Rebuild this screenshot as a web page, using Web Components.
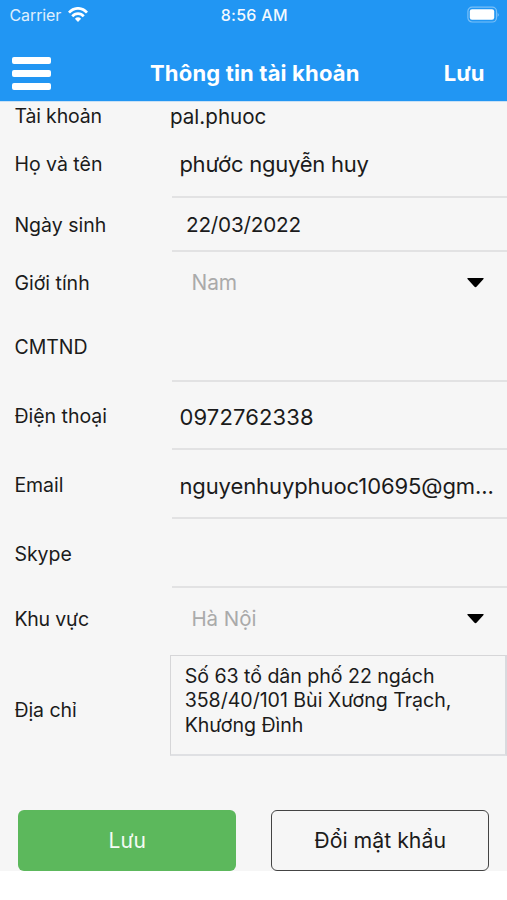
<!DOCTYPE html>
<html lang="vi">
<head>
<meta charset="utf-8">
<title>Thông tin tài khoản</title>
<style>
html,body{margin:0;background:#fff}
body{width:507px;height:900px;overflow:hidden;font-family:Inter,"Noto Sans",sans-serif;color:#1b1b1b}
</style>
</head>
<body>
<account-page></account-page>
<script>
const define = (name, html, setup) => {
  const tpl = document.createElement('template');
  tpl.innerHTML = html;
  customElements.define(name, class extends HTMLElement {
    connectedCallback() {
      if (this.shadowRoot) return;
      const root = this.attachShadow({ mode: 'open' });
      root.appendChild(tpl.content.cloneNode(true));
      if (setup) setup(this, root);
    }
  });
};

define('status-bar', `
<style>
:host{display:grid;grid-template-columns:1fr auto 1fr;align-items:center;height:30px;padding:0 7px 0 9.5px;font-size:16px;line-height:20px;color:#fff}
.left{display:flex;align-items:center;gap:6.5px}
.carrier{letter-spacing:-.1px;opacity:.85}
.time{font-weight:500;letter-spacing:.3px;opacity:.95;margin-left:-1px}
.battery{justify-self:end}
svg{display:block}
</style>
<div class="left"><span class="carrier">Carrier</span>
<svg width="20" height="16" viewBox="0 0 20 16" fill="none" stroke="#fff" stroke-width="2.7"><path d="M1 5.6C6-.1 14-.1 19 5.6"/><path d="M4.3 9.3C7.4 5.7 12.6 5.7 15.7 9.3"/><path d="M10 14.9L6.9 11.7Q10 9 13.1 11.7Z" fill="#fff" stroke="none"/></svg></div>
<span class="time">8:56 AM</span>
<svg class="battery" width="33" height="18" viewBox="0 0 33 18"><rect x=".9" y="1.2" width="28.6" height="14.8" rx="4.2" fill="none" stroke="#fff" stroke-opacity=".4" stroke-width="1.2"/><rect x="2.8" y="3.2" width="24.4" height="10.6" rx="2.2" fill="#fff"/><path d="M30.7 6.3q1.8 2.2 0 4.6z" fill="#fff" fill-opacity=".5"/></svg>`);

define('nav-bar', `
<style>
:host{display:grid;grid-template-columns:138px 1fr auto;align-items:center;height:56px;padding:0 22.5px 0 12px;color:#fff;font-weight:700;font-size:22px;line-height:28px}
.menu{display:grid;gap:6px;width:39px;padding-top:1px}
.menu i{height:7px;border-radius:2px;background:#fff}
.title{letter-spacing:.17px}
</style>
<div class="menu"><i></i><i></i><i></i></div>
<div class="title"><slot></slot></div>
<div class="action"><slot name="action"></slot></div>`);

define('form-row', `
<style>
:host{display:grid;flex:none;grid-template-columns:172px 1fr;height:var(--h);box-sizing:border-box}
.label{display:flex;align-items:center;padding:var(--lpt,0) 0 var(--lpb,0) 14.4px;font-size:19.5px;white-space:nowrap;letter-spacing:var(--label-ls,0)}
.value{display:flex;align-items:center;box-sizing:border-box;padding:var(--pt,0) 0 0 var(--pl,7px);font-size:var(--fs,22px);letter-spacing:var(--ls,0);white-space:nowrap;min-width:0}
:host([lined]) .value{border-bottom:2px solid #e2e2e3}
:host([select]) .value{justify-content:space-between;padding-right:22px;color:#aaa}
svg{display:none;padding-top:1.5px}
:host([select]) svg{display:block}
</style>
<div class="label"></div>
<div class="value"><span><slot></slot></span><svg width="19" height="11" viewBox="0 0 19 11"><path d="M2 .5H17Q18.4.5 17.3 1.7L10.7 9Q9.5 10.3 8.3 9L1.7 1.7Q.6.5 2 .5Z" fill="#000"/></svg></div>`,
(el, root) => { root.querySelector('.label').textContent = el.getAttribute('label'); });

define('address-row', `
<style>
:host{display:grid;flex:none;grid-template-columns:170px 1fr;height:101px;margin-top:6px}
.label{display:flex;align-items:center;padding:8px 0 0 14.4px;font-size:19.5px;letter-spacing:-.05px}
.box{box-sizing:border-box;border:1px solid #d6d6d8;border-right:2px solid #d9dade;border-bottom:2px solid #dfe0e3;padding:8px 0 0 13.7px;font-size:19.6px;line-height:24.4px;letter-spacing:-.04px}
::slotted(div){white-space:nowrap}
</style>
<div class="label">Địa chỉ</div><div class="box"><slot></slot></div>`);

define('push-button', `
<style>
:host{display:flex;align-items:center;justify-content:center;box-sizing:border-box;width:218px;height:61px;border-radius:6px;font-size:21.3px}
:host([kind=primary]){background:#5cb85c;color:#f4fbf4;font-size:21px}
:host([kind=outline]){border:1.5px solid #444;padding-bottom:1px}
</style><slot></slot>`);

define('account-page', `
<style>
:host{display:block}
header{height:101px;background:#2196f3;border-bottom:1px solid #c9e1f5;display:flex;flex-direction:column;justify-content:space-between}
main{background:#f6f6f6;height:769px;display:flex;flex-direction:column}
.actions{display:flex;gap:35px;padding:54px 0 0 18.2px}
.account{margin-left:-2px}
</style>
<header><status-bar></status-bar><nav-bar>Thông tin tài khoản<span slot="action">Lưu</span></nav-bar></header>
<main>
<form-row label="Tài khoản" style="--h:29px;--pl:0px;--fs:20.6px;--label-ls:-.15px;--lpb:1px"><span class="account">pal.phuoc</span></form-row>
<form-row lined label="Họ và tên" style="--h:67px;--ls:-.24px;--pl:7.4px;--pt:1px;--lpb:2px">phước nguyễn huy</form-row>
<form-row lined label="Ngày sinh" style="--h:54px;--fs:20.7px;--pl:14px;--ls:-.2px">22/03/2022</form-row>
<form-row select label="Giới tính" style="--h:61px;--fs:20.9px;--pl:19.4px">Nam</form-row>
<form-row lined label="CMTND" style="--h:69px;--lpb:1px"></form-row>
<form-row lined label="Điện thoại" style="--h:68px;--pt:3px;--ls:.15px;--pl:7.4px">0972762338</form-row>
<form-row lined label="Email" style="--h:69px;--pt:4px;--ls:-.09px;--pl:7.4px;--label-ls:-.05px">nguyenhuyphuoc10695@gm...</form-row>
<form-row lined label="Skype" style="--h:69px"></form-row>
<form-row select label="Khu vực" style="--h:61px;--fs:20.5px;--pl:19.4px;--label-ls:-.2px;--ls:-.05px">Hà Nội</form-row>
<address-row><div>Số 63 tổ dân phố 22 ngách</div><div>358/40/101 Bùi Xương Trạch,</div><div>Khương Đình</div></address-row>
<div class="actions"><push-button kind="primary">Lưu</push-button><push-button kind="outline">Đổi mật khẩu</push-button></div>
</main>`);
</script>
</body>
</html>
